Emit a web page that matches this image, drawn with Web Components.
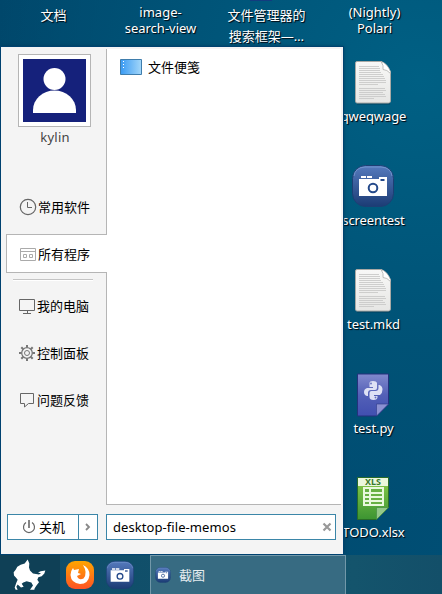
<!DOCTYPE html>
<html lang="zh-CN">
<head>
<meta charset="utf-8">
<title>Desktop</title>
<style>
html,body{margin:0;height:100%;overflow:hidden}
body{font:13px/16px "Noto Sans","Noto Sans CJK SC",sans-serif}
</style>
</head>
<body>
<kylin-desktop></kylin-desktop>
<script>
const define=(name,html)=>customElements.define(name,class extends HTMLElement{
  constructor(){super();this.attachShadow({mode:'open'}).innerHTML=html;}
});

const camera=`<defs><linearGradient id="c" x2="0" y2="1"><stop stop-color="#557abd"/><stop offset="1" stop-color="#1c3c75"/></linearGradient></defs>
<rect x="3.500" y="3.500" width="41" height="41" rx="13" fill="url(#c)" stroke="#1d3f74"/>
<path d="M5 14Q6 5.500 16 5H32Q42 5.500 43 14" fill="none" stroke="#7b9cd2" opacity=".8"/>
<path d="M12 14h5v2h-5zM18 14h5v2h-5zM10 17h20v-2h8v19H10z" fill="#fff"/><path d="M31.500 17h4v2h-4z" fill="#24498a"/>
<circle cx="24" cy="26" r="4.300" fill="#fff" stroke="#24498a" stroke-width="2"/>`;
const doc=`<defs><linearGradient id="d" x2="0" y2="1"><stop stop-color="#f8f8f7"/><stop offset="1" stop-color="#e6e6e4"/></linearGradient></defs>
<path d="M8 45.500h33" stroke="#002f47" stroke-width="2" opacity=".5"/>
<path d="M8 3.500h24q5 2 9.500 11V43q0 2-2 2H8q-1.500 0-1.500-2V5q0-1.500 1.500-1.500z" fill="url(#d)" stroke="#a9a9a5"/>
<path d="M32 3.500q3 4 2 8 4 0 7.500 4v-2Q38 5 32 3.500z" fill="#fff" stroke="#b0b0ad" stroke-width=".8"/>
<path d="M10 8.500h20M10 10.500h21M10 12.500h21M10 14.500h22M10 16.500h24M10 18.500h25M10 20.500h26M10 22.500h27M10 24.500h27M10 26.500h19M10 30.500h26M10 32.500h27M10 34.500h24M10 36.500h26M10 38.500h27M10 40.500h15" stroke="#cacac8" stroke-width=".9"/>`;
const python=`<defs><linearGradient id="p" x2="0" y2="1"><stop stop-color="#8189cd"/><stop offset=".5" stop-color="#5360b7"/><stop offset="1" stop-color="#414fb0"/></linearGradient></defs>
<path d="M8.500 4h31v30l-12 12h-19z" fill="url(#p)" stroke="#24317d"/><path d="M27.500 34h12l-12 12z" fill="#8c91d2" stroke="#2e3988" stroke-width=".6"/>
<g fill="#dfe2f5"><path d="M20.500 13q0-2 3.500-2t4 2v5q0 2-2 2h-4q-3 0-3 3v3h-1q-3-1-3-4t3-4h6v-1h-3.500z"/><path d="M28.500 27q0 3-4 3t-4-3v-4q0-2 2-2h4q3 0 3-3v-3h1q3 1 3 4.500T31 25h-6v1h3.500z"/></g><circle cx="22" cy="13.500" r=".9" fill="#6570bf"/><circle cx="26.500" cy="27.500" r=".9" fill="#6570bf"/>`;
const xls=`<defs><linearGradient id="x" x2="0" y2="1"><stop stop-color="#8dcd4c"/><stop offset="1" stop-color="#3c9432"/></linearGradient></defs>
<path d="M8.500 3.500h31v30l-12 12h-19z" fill="url(#x)" stroke="#286c28"/><path d="M9 4h30v8H9z" fill="#eaf7dd"/><path d="M27.500 33.500h12l-12 12z" fill="#94c88a" stroke="#3e883a" stroke-width=".6"/>
<text x="24" y="11" text-anchor="middle" font-family="Noto Sans" font-size="8.500" font-weight="700" fill="#3a7a2c" textLength="16" lengthAdjust="spacingAndGlyphs" style="text-shadow:none">XLS</text>
<path d="M14 13h21v19H14z" fill="#e9f8dd"/><path d="M16 15h4v3h-4zm6 0h11v3H22zM16 20h4v2h-4zm6 0h11v2H22zM16 24h4v2h-4zm6 0h11v2H22zM16 28h4v2h-4zm6 0h11v2H22z" fill="#68b044"/>`;

define('desktop-item',`<style>
:host{display:flex;flex-direction:column;align-items:center;width:107px;height:104px;box-sizing:border-box;color:#fff;text-align:center;text-shadow:1px 1px 1px #001420,1px 1px 0 #00263a;font-size:13px;line-height:16px}
slot[name=icon]{display:block;height:48px;margin-right:2px}::slotted(svg){display:block}
.label{margin-top:2px;letter-spacing:-.08px}
</style><slot name="icon"></slot><div class="label"><slot></slot></div>`);

define('menu-entry',`<style>
:host{display:flex;align-items:center;box-sizing:border-box;height:39px;margin-left:5px;padding-left:13px;gap:1px;color:#000}
:host([active]){background:#fff;border:1px solid #b5b5b5;border-right:0;padding-left:12px}
::slotted(svg){display:block;flex:none}
</style><slot name="icon"></slot><span><slot></slot></span>`);

define('user-card',`<style>
:host{display:flex;flex-direction:column;align-items:center;color:#444;width:73px;margin-left:17px}
.frame{box-sizing:border-box;width:73px;height:73px;border:1px solid #b5b5b5;background:#fff;padding:4px}
svg{display:block}.name{margin-top:1px;font-size:13px;line-height:18px;letter-spacing:.25px;padding-left:1px}
</style><div class="frame"><svg width="63" height="63" viewBox="0 0 63 63"><path fill="#15217b" d="M0 0h63v63H0z"/><circle cx="31.500" cy="20" r="11" fill="#fff"/><path d="M10 54v-3a21.500 19.500 0 0 1 43 0v3z" fill="#fff"/></svg></div><div class="name"><slot></slot></div>`);

define('search-box',`<style>
:host{display:flex;align-items:center;justify-content:space-between;box-sizing:border-box;width:230px;height:26px;border:1px solid #3b86a8;background:#fff;padding:0 3px 0 6px;color:#000}
svg{display:block}span{letter-spacing:.07px}
</style><span><slot></slot></span><svg width="10" height="10" viewBox="0 0 10 10"><path d="M1.500 1.500l7 7m0-7l-7 7" stroke="#999" stroke-width="2.200"/></svg>`);

define('power-button',`<style>
:host{display:flex;box-sizing:border-box;width:91px;height:26px;border:1px solid #3b86a8;background:#fff;color:#000}
.main{display:flex;align-items:center;box-sizing:border-box;width:70px;padding-left:14px;gap:3px}
.more{display:flex;align-items:center;justify-content:center;border-left:1px solid #3b86a8;flex:1}
svg{display:block}
</style><div class="main"><svg width="14" height="14" viewBox="0 0 14 14" fill="none" stroke="#666" stroke-width="1.200"><path d="M4 2.500a5.500 5.500 0 1 0 6 0"/><path d="M7 0v8" stroke-width="1.600"/></svg><slot></slot></div><div class="more"><svg width="6" height="8" viewBox="0 0 6 8"><path d="M1 1l3 3-3 3" fill="none" stroke="#888" stroke-width="1.800"/></svg></div>`);

define('start-menu',`<style>
:host{display:grid;grid-template-columns:106px 1fr;grid-template-rows:458px 1fr;width:342px;height:507px;background:#f4f4f4;box-shadow:0 0 0 1px #004270,0 0 4px #00304f}
.side{display:flex;flex-direction:column;padding-top:7px;background:linear-gradient(#b5b5b5,#b5b5b5) 105px 2px/1px 100% no-repeat}
.programs{background:#fff;border-bottom:1px solid #b5b5b5;margin:2px 2px 0 0;box-sizing:border-box;padding:8px 0 0 13px}
.program{display:flex;align-items:center;gap:6px;height:20px}
.entries{display:flex;flex-direction:column;margin-top:41px}
.rule{width:80px;height:1px;background:#c4c4c4;margin:6px 0 6px 12px;box-shadow:0 1px #fff}
.gap{height:8px}.foot{grid-column:1/3;display:flex;padding:9px 6px;gap:8px;align-items:flex-start}
svg{display:block}
</style>
<div class="side"><user-card>kylin</user-card><div class="entries">
<menu-entry><svg slot="icon" width="18" height="18" viewBox="0 0 18 18" fill="none" stroke="#666"><circle cx="9" cy="9" r="7.700" stroke-width="1.200"/><path d="M8.500 4v5.500H13"/></svg>常用软件</menu-entry><div class="gap"></div>
<menu-entry active><svg slot="icon" width="18" height="18" viewBox="0 0 18 18" fill="none" stroke="#aaa"><path d="M1.500 3.500h15v12h-15zM1.500 6.500h15M4.500 9.500h3v3h-3zM10.500 9.500h3v3h-3z"/></svg>所有程序</menu-entry>
<div class="rule"></div>
<menu-entry><svg slot="icon" width="17" height="18" viewBox="0 0 17 18" fill="none" stroke="#666"><path d="M.5 2.500h15v11H.5zM8.500 14v2M4 16.500h8"/></svg>我的电脑</menu-entry><div class="gap"></div>
<menu-entry><svg slot="icon" width="17" height="18" viewBox="0 0 17 18" fill="none" stroke="#777"><circle cx="8" cy="9" r="5.300" stroke-width="1.300"/><circle cx="8" cy="9" r="2.500"/><path d="M8 1v2.500M8 14.500V17M0 9h2.500M13.500 9H16M2.300 3.300l2 2M11.700 12.700l2 2M13.700 3.300l-2 2M4.300 12.700l-2 2" stroke-width="2"/></svg>控制面板</menu-entry><div class="gap"></div>
<menu-entry><svg slot="icon" width="17" height="18" viewBox="0 0 17 18" fill="none" stroke="#666"><path d="M1.500 2.500h13v10h-5l-4 3.500v-3.500h-4z"/></svg>问题反馈</menu-entry>
</div></div>
<div class="programs"><div class="program"><svg width="22" height="16" viewBox="0 0 22 16"><defs><linearGradient id="m"><stop stop-color="#399af3"/><stop offset="1" stop-color="#a4d7f9"/></linearGradient></defs><path d="M.5.500h21v15H.5z" fill="url(#m)" stroke="#3f7dac"/><path d="M3.500 2v9" stroke="#fff" stroke-dasharray="1 2"/></svg><span>文件便笺</span></div></div>
<div class="foot"><power-button>关机</power-button><search-box>desktop-file-memos</search-box></div>`);

define('task-bar',`<style>
:host{display:flex;height:39px;background:linear-gradient(90deg,#0e4c69,#14546c 80%,#134f69)}
div{display:flex;align-items:center;justify-content:center;box-sizing:border-box}svg{display:block}
.start{width:60px;background:#0f4056}.apps{width:90px;justify-content:flex-start;padding-left:3px;gap:9px}
.task{width:196px;border:1px solid #7298a9;border-bottom:0;background:#376b82;justify-content:flex-start;padding-left:4px;gap:8px;color:#e5edf0}
</style>
<div class="start"><svg width="34" height="34" viewBox="39 187.500 102 102"><path fill="#fff" d="M83 192l5 12-1 12 3 9 9 9 18 3 6-4-9-2 8-4 14-2-3 9-8 8-10 3-3 8 5 7-7 9-6 9-1 5H90l9-13-5-9-14-4-10 4-5 4 6 9-8 2-10-9-4 7 4 9H47l-3-7 5-14 4-9-6-8-5-5-1-10 6-7 5-9 10-6 12-4z"/></svg></div>
<div class="apps"><svg width="34" height="34" viewBox="0 0 34 34"><defs><linearGradient id="f" x2="0" y2="1"><stop stop-color="#ffa500"/><stop offset="1" stop-color="#ff5324"/></linearGradient></defs><rect x="3" y="3" width="28" height="28" rx="9" fill="url(#f)"/><path fill="#fff" d="M20 7q6.500 3 6.500 10-1 9-9.500 9-9-1-9.500-9 0-4 2.500-7l1 2 5-1-1 4 3 1-4 2q2 5 6.500 2.500Q25 15 20 7z"/></svg><svg width="28" height="28" viewBox="3 3 42 42">${camera}</svg></div>
<div class="task"><svg width="16" height="16" viewBox="2 2 44 44">${camera}</svg><span>截图</span></div>`);

define('kylin-desktop',`<style>
:host{display:block;position:relative;width:442px;height:594px;overflow:hidden;background:radial-gradient(ellipse 440px 440px at 420px 80px,#006084,#005276 60%,transparent),linear-gradient(105deg,#00466a,#004e74)}
.col{display:flex;flex-direction:column;margin-left:320px;padding-top:58px}
.nub{position:absolute;left:250px;top:0;width:22px;height:1px;background:#123c7f}
.names{position:absolute;left:0;top:5px;display:grid;grid-template-columns:repeat(4,107px);color:#fff;text-align:center;line-height:16px;text-shadow:1px 1px 1px #001420,1px 1px 0 #00263a}
.names>div{margin-top:-1px}
.names .cjk{line-height:21px;margin:0 2px 0 0}.names .cjk:first-child{margin-right:0}
start-menu{position:absolute;left:1px;top:47px}task-bar{position:absolute;left:0;right:0;top:555px}
</style>
<div class="nub"></div>
<div class="names"><div class="cjk">文档</div><div>image-<br>search-view</div><div class="cjk">文件管理器的<br>搜索框架—…</div><div>(Nightly)<br>Polari</div></div>
<div class="col">
<desktop-item><svg slot="icon" width="48" height="48" viewBox="0 0 48 48">${doc}</svg>qweqwage</desktop-item>
<desktop-item><svg slot="icon" width="48" height="48" viewBox="0 0 48 48">${camera}</svg>screentest</desktop-item>
<desktop-item><svg slot="icon" width="48" height="48" viewBox="0 0 48 48">${doc}</svg>test.mkd</desktop-item>
<desktop-item><svg slot="icon" width="48" height="48" viewBox="0 0 48 48">${python}</svg>test.py</desktop-item>
<desktop-item><svg slot="icon" width="48" height="48" viewBox="0 0 48 48">${xls}</svg>TODO.xlsx</desktop-item>
</div><start-menu></start-menu><task-bar></task-bar>`);
</script>
</body>
</html>
